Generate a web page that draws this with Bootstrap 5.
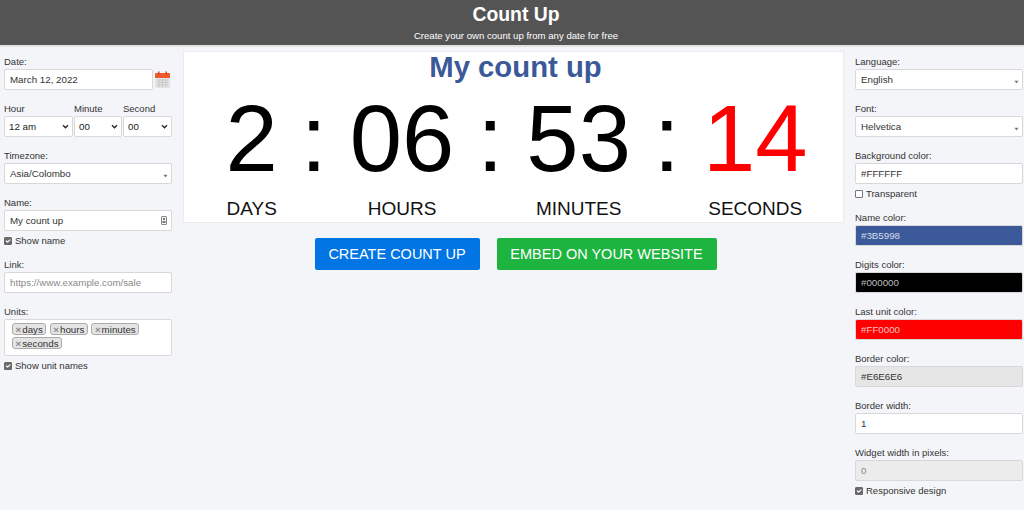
<!DOCTYPE html>
<html lang="en">
<head>
<meta charset="utf-8">
<title>Count Up</title>
<link href="https://cdn.jsdelivr.net/npm/bootstrap@5.3.0/dist/css/bootstrap.min.css" rel="stylesheet">
<style>
html,body{height:510px;overflow:hidden}
body{background:#f3f5f9;font-family:"Liberation Sans",Arial,sans-serif;color:#333;font-size:9.500px}
.top-bar{height:47px;background:#545454;border-bottom:2px solid #e2e2e2;color:#fff;padding-left:8px}
.top-bar h1{font-size:19.400px;font-weight:700;line-height:22px;margin:0;padding-top:3px}
.top-bar p{font-size:9.600px;line-height:12px;margin:5px 0 0}
.side-col{width:168px;flex:none}
.left-col{margin-left:4px}
.right-col{margin-left:11px}
.fld{margin-bottom:12px}
.fld.with-chk{margin-bottom:11px}
.fld label{display:block;font-size:9.500px;line-height:13px;margin-bottom:1px;padding-top:0;color:#333}
.form-control,.form-select{height:21px;min-height:21px;font-size:9.750px;line-height:12px;padding:0 5px;border:1px solid #d8d8d8;border-radius:2px;color:#333;box-shadow:none}
.form-control::placeholder{color:#8a8a8a}
.form-select{padding-right:10px}
.form-select.hour{padding-left:4px;color:#222;background-image:url("data:image/svg+xml,%3Csvg xmlns='http://www.w3.org/2000/svg' viewBox='0 0 8 6'%3E%3Cpath fill='none' stroke='%23222' stroke-width='1.600' d='M1 1.500l3 3 3-3'/%3E%3C/svg%3E");background-size:7px 5px;background-position:right 3px center}
.form-select.chosen{background-image:url("data:image/svg+xml,%3Csvg xmlns='http://www.w3.org/2000/svg' viewBox='0 0 6 4'%3E%3Cpath fill='%23777' d='M.5.500h5L3 3.800z'/%3E%3C/svg%3E");background-size:5px 4px;background-position:right 3px top 10px}
.time-row{display:flex;gap:1px}
.time-row>div:first-child{width:69px}
.time-row>div:nth-child(2){width:48px}
.time-row>div:nth-child(3){width:49px}
.chk{display:flex;align-items:center;gap:3px;font-size:9.500px;line-height:12px;height:12px;margin:4px 0 0}
.chk .form-check-input{width:8px;height:8px;margin:0;flex:none;border-radius:1px;border-color:#777;background-size:8px}
.chk .form-check-input:checked{background-color:#6a6a6a;border-color:#6a6a6a}
.tag-box{background:#fff;border:1px solid #d8d8d8;border-radius:2px;padding:3px 7px;height:37px;display:flex;flex-wrap:wrap;gap:2px 3.500px;align-content:flex-start}
.tag-item{background:#e4e4e4;border:1px solid #aaa;border-radius:3px;font-size:9.750px;line-height:11px;padding:0 2.500px;color:#333;height:12px}
.tag-item b{color:#888;font-weight:700;margin-right:1px}
.cal-ico{width:15px;height:18px;flex:none;margin-left:2px}
.name-ico{position:absolute;right:5px;top:6px;width:6px;height:9px}
.cu-widget{background:#fff;border:1px solid #ececec;height:172px;margin-top:4px}
.cu-title{color:#3b5998;font-size:29.300px;font-weight:700;line-height:34px;text-align:center;margin-top:-2px;padding-left:4px}
.cu-row{display:flex;justify-content:center;padding-left:6px;margin-top:-1px}
.cu-cell{text-align:center;display:flex;flex-direction:column;align-items:center}
.cu-num{font-size:94px;line-height:112px;color:#000}
.cu-name{font-size:19px;line-height:22px;color:#111;white-space:nowrap;width:0;display:flex;justify-content:center;margin-top:3px}
.cu-sep{width:72px;text-align:center;font-size:94px;line-height:112px;color:#000}
.cu-red{color:#f00}
.cta{padding:0;height:32px;line-height:33px;font-size:14.500px;border-radius:2px;border:0;color:#fff}
.cta-blue{width:165px;background:#0275e4}
.cta-green{width:220px;background:#1db440}
.cta:hover{color:#fff}
.cta-blue:hover{background:#0275e4}
.cta-green:hover{background:#1db440}
.cta-row{gap:17px;padding-left:4px;margin-top:15px}
.c-name{background:#3b5998!important;color:#d8dfee!important}
.c-digits{background:#000!important;color:#bbb!important}
.c-last{background:#f00!important;color:#ffc0c0!important}
.c-border{background:#e6e6e6!important;color:#333!important}
.form-control:disabled{background:#ececec;color:#888}
.main-col{margin-left:11px;width:661px;flex:none}
</style>
</head>
<body>
<header class="top-bar text-center">
  <h1>Count Up</h1>
  <p>Create your own count up from any date for free</p>
</header>
<div class="d-flex">
  <aside class="side-col left-col pt-2">
    <div class="fld">
      <label for="d">Date:</label>
      <div class="d-flex align-items-center">
        <input id="d" class="form-control" style="width:149px" value="March 12, 2022">
        <svg class="cal-ico" viewBox="0 0 15 18"><rect x="0" y="2" width="15" height="15" rx="1" fill="#e3e3e3"/><path d="M0 3a1 1 0 0 1 1-1h13a1 1 0 0 1 1 1v4H0z" fill="#ee5a2c"/><rect x="3" y="0.500" width="1.500" height="3" fill="#c9482a"/><rect x="10.500" y="0.500" width="1.500" height="3" fill="#c9482a"/><path d="M2 9h11M2 11.500h11M2 14h11M4 8v8M7.500 8v8M11 8v8" stroke="#c4c4c4" stroke-width=".8" fill="none"/></svg>
      </div>
    </div>
    <div class="fld time-row">
      <div><label>Hour</label><select class="form-select hour"><option>12 am</option></select></div>
      <div><label>Minute</label><select class="form-select hour"><option>00</option></select></div>
      <div><label>Second</label><select class="form-select hour"><option>00</option></select></div>
    </div>
    <div class="fld">
      <label>Timezone:</label>
      <select class="form-select chosen"><option>Asia/Colombo</option></select>
    </div>
    <div class="fld with-chk">
      <label>Name:</label>
      <div class="position-relative">
        <input class="form-control" value="My count up">
        <svg class="name-ico" viewBox="0 0 6 9"><rect x=".5" y=".5" width="5" height="8" rx=".5" fill="#f4f4f4" stroke="#888"/><rect x="2" y="2" width="2" height="2" fill="#777"/><rect x="1.500" y="5" width="3" height="2" fill="#777"/></svg>
      </div>
      <div class="chk"><input class="form-check-input" type="checkbox" checked><span>Show name</span></div>
    </div>
    <div class="fld">
      <label>Link:</label>
      <input class="form-control" placeholder="https://www.example.com/sale">
    </div>
    <div class="fld with-chk">
      <label>Units:</label>
      <div class="tag-box">
        <span class="tag-item"><b>×</b>days</span>
        <span class="tag-item"><b>×</b>hours</span>
        <span class="tag-item"><b>×</b>minutes</span>
        <span class="tag-item"><b>×</b>seconds</span>
      </div>
      <div class="chk"><input class="form-check-input" type="checkbox" checked><span>Show unit names</span></div>
    </div>
  </aside>
  <main class="main-col">
    <section class="cu-widget">
      <div class="cu-title">My count up</div>
      <div class="cu-row">
        <div class="cu-cell"><div class="cu-num">2</div><div class="cu-name">DAYS</div></div>
        <div class="cu-sep">:</div>
        <div class="cu-cell"><div class="cu-num">06</div><div class="cu-name">HOURS</div></div>
        <div class="cu-sep">:</div>
        <div class="cu-cell"><div class="cu-num">53</div><div class="cu-name">MINUTES</div></div>
        <div class="cu-sep">:</div>
        <div class="cu-cell"><div class="cu-num cu-red">14</div><div class="cu-name">SECONDS</div></div>
      </div>
    </section>
    <div class="d-flex justify-content-center cta-row">
      <a class="btn cta cta-blue" href="#">CREATE COUNT UP</a>
      <a class="btn cta cta-green" href="#">EMBED ON YOUR WEBSITE</a>
    </div>
  </main>
  <aside class="side-col right-col pt-2">
    <div class="fld"><label>Language:</label><select class="form-select chosen"><option>English</option></select></div>
    <div class="fld"><label>Font:</label><select class="form-select chosen"><option>Helvetica</option></select></div>
    <div class="fld with-chk">
      <label>Background color:</label>
      <input class="form-control" value="#FFFFFF">
      <div class="chk"><input class="form-check-input" type="checkbox"><span>Transparent</span></div>
    </div>
    <div class="fld"><label>Name color:</label><input class="form-control c-name" value="#3B5998"></div>
    <div class="fld"><label>Digits color:</label><input class="form-control c-digits" value="#000000"></div>
    <div class="fld"><label>Last unit color:</label><input class="form-control c-last" value="#FF0000"></div>
    <div class="fld"><label>Border color:</label><input class="form-control c-border" value="#E6E6E6"></div>
    <div class="fld"><label>Border width:</label><input class="form-control" value="1"></div>
    <div class="fld with-chk">
      <label>Widget width in pixels:</label>
      <input class="form-control" value="0" disabled>
      <div class="chk"><input class="form-check-input" type="checkbox" checked><span>Responsive design</span></div>
    </div>
  </aside>
</div>
<script src="https://cdn.jsdelivr.net/npm/bootstrap@5.3.0/dist/js/bootstrap.bundle.min.js"></script>
</body>
</html>
